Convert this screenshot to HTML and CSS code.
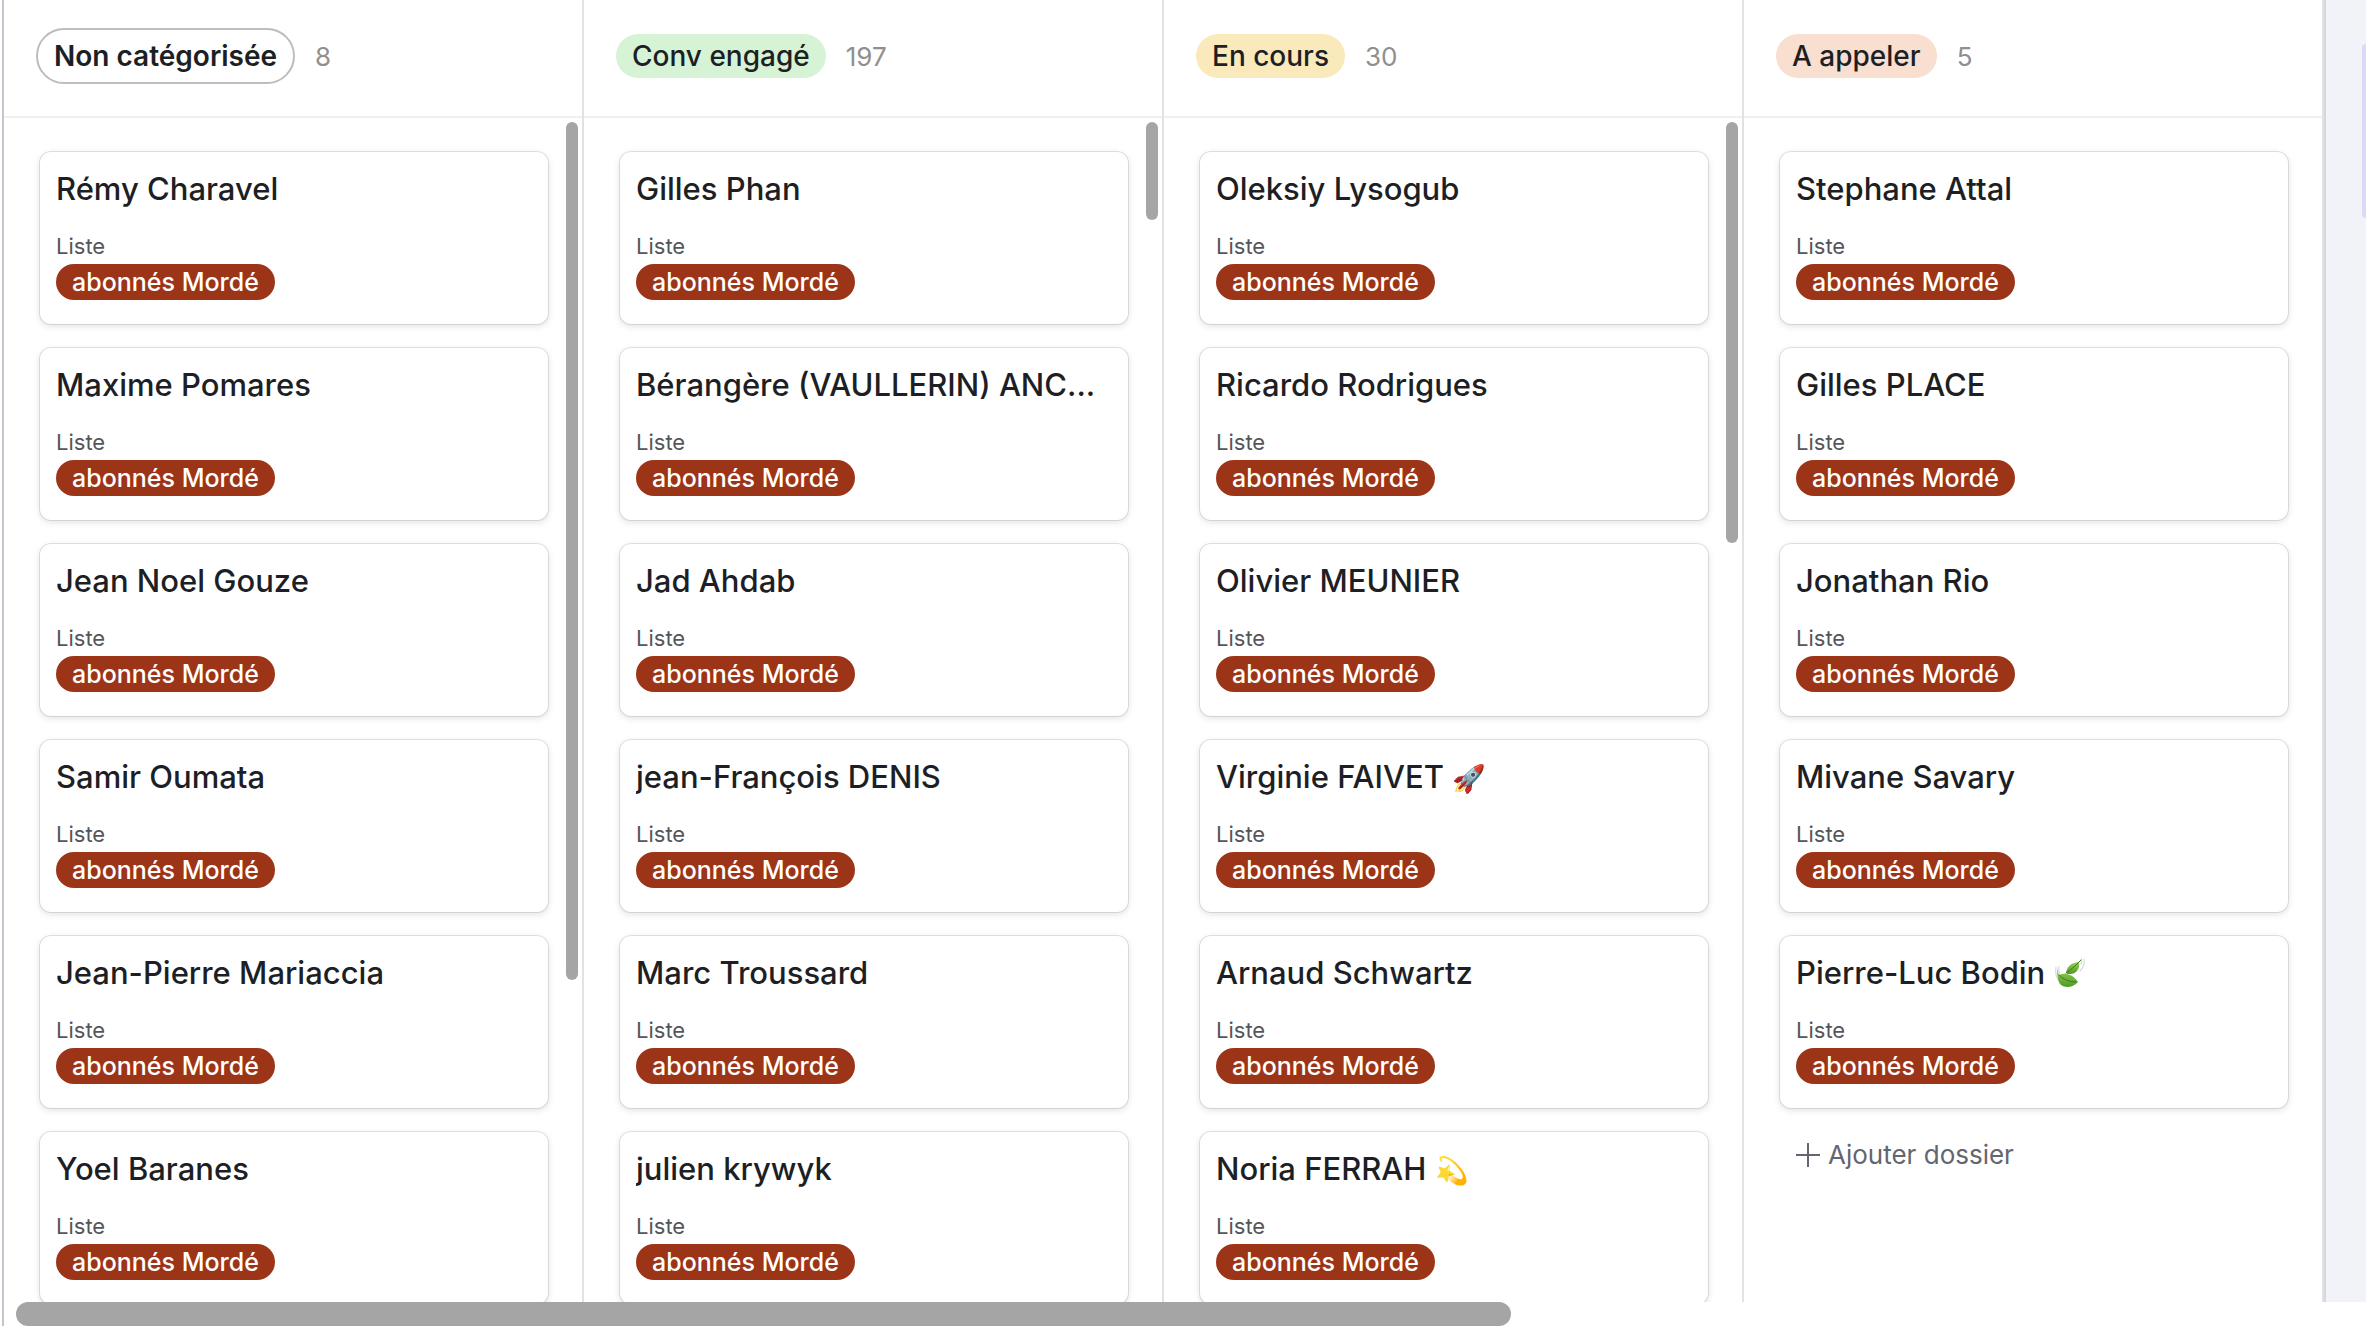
FILE: index.html
```html
<!DOCTYPE html>
<html lang="fr">
<head>
    <meta charset="UTF-8">
    <meta name="viewport" content="width=device-width, initial-scale=1">
    <title>Dossiers</title>
    <link rel="stylesheet" href="styles.css">
</head>
<body>
    <main class="board">
        <div class="columns">
            <section class="column">
                <header class="column-header">
                    <h2 class="status outline">Non catégorisée</h2>
                    <span class="count">8</span>
                </header>
                <div class="column-body">
                    <article class="card">
                        <h3>Rémy Charavel</h3>
                        <p class="label">Liste</p>
                        <span class="tag">abonnés Mordé</span>
                    </article>
                    <article class="card">
                        <h3>Maxime Pomares</h3>
                        <p class="label">Liste</p>
                        <span class="tag">abonnés Mordé</span>
                    </article>
                    <article class="card">
                        <h3>Jean Noel Gouze</h3>
                        <p class="label">Liste</p>
                        <span class="tag">abonnés Mordé</span>
                    </article>
                    <article class="card">
                        <h3>Samir Oumata</h3>
                        <p class="label">Liste</p>
                        <span class="tag">abonnés Mordé</span>
                    </article>
                    <article class="card">
                        <h3>Jean-Pierre Mariaccia</h3>
                        <p class="label">Liste</p>
                        <span class="tag">abonnés Mordé</span>
                    </article>
                    <article class="card">
                        <h3>Yoel Baranes</h3>
                        <p class="label">Liste</p>
                        <span class="tag">abonnés Mordé</span>
                    </article>
                    <div class="scroll-y"><div class="thumb" style="height: 73%"></div></div>
                </div>
            </section>

            <section class="column">
                <header class="column-header">
                    <h2 class="status green">Conv engagé</h2>
                    <span class="count">197</span>
                </header>
                <div class="column-body">
                    <article class="card">
                        <h3>Gilles Phan</h3>
                        <p class="label">Liste</p>
                        <span class="tag">abonnés Mordé</span>
                    </article>
                    <article class="card">
                        <h3>Bérangère (VAULLERIN) ANC...</h3>
                        <p class="label">Liste</p>
                        <span class="tag">abonnés Mordé</span>
                    </article>
                    <article class="card">
                        <h3>Jad Ahdab</h3>
                        <p class="label">Liste</p>
                        <span class="tag">abonnés Mordé</span>
                    </article>
                    <article class="card">
                        <h3>jean-François DENIS</h3>
                        <p class="label">Liste</p>
                        <span class="tag">abonnés Mordé</span>
                    </article>
                    <article class="card">
                        <h3>Marc Troussard</h3>
                        <p class="label">Liste</p>
                        <span class="tag">abonnés Mordé</span>
                    </article>
                    <article class="card">
                        <h3>julien krywyk</h3>
                        <p class="label">Liste</p>
                        <span class="tag">abonnés Mordé</span>
                    </article>
                    <div class="scroll-y"><div class="thumb" style="height: 8.3%"></div></div>
                </div>
            </section>

            <section class="column">
                <header class="column-header">
                    <h2 class="status yellow">En cours</h2>
                    <span class="count">30</span>
                </header>
                <div class="column-body">
                    <article class="card">
                        <h3>Oleksiy Lysogub</h3>
                        <p class="label">Liste</p>
                        <span class="tag">abonnés Mordé</span>
                    </article>
                    <article class="card">
                        <h3>Ricardo Rodrigues</h3>
                        <p class="label">Liste</p>
                        <span class="tag">abonnés Mordé</span>
                    </article>
                    <article class="card">
                        <h3>Olivier MEUNIER</h3>
                        <p class="label">Liste</p>
                        <span class="tag">abonnés Mordé</span>
                    </article>
                    <article class="card">
                        <h3>Virginie FAIVET <span class="emoji">🚀</span></h3>
                        <p class="label">Liste</p>
                        <span class="tag">abonnés Mordé</span>
                    </article>
                    <article class="card">
                        <h3>Arnaud Schwartz</h3>
                        <p class="label">Liste</p>
                        <span class="tag">abonnés Mordé</span>
                    </article>
                    <article class="card">
                        <h3>Noria FERRAH <span class="emoji">💫</span></h3>
                        <p class="label">Liste</p>
                        <span class="tag">abonnés Mordé</span>
                    </article>
                    <div class="scroll-y"><div class="thumb" style="height: 35.8%"></div></div>
                </div>
            </section>

            <section class="column">
                <header class="column-header">
                    <h2 class="status orange">A appeler</h2>
                    <span class="count">5</span>
                </header>
                <div class="column-body">
                    <article class="card">
                        <h3>Stephane Attal</h3>
                        <p class="label">Liste</p>
                        <span class="tag">abonnés Mordé</span>
                    </article>
                    <article class="card">
                        <h3>Gilles PLACE</h3>
                        <p class="label">Liste</p>
                        <span class="tag">abonnés Mordé</span>
                    </article>
                    <article class="card">
                        <h3>Jonathan Rio</h3>
                        <p class="label">Liste</p>
                        <span class="tag">abonnés Mordé</span>
                    </article>
                    <article class="card">
                        <h3>Mivane Savary</h3>
                        <p class="label">Liste</p>
                        <span class="tag">abonnés Mordé</span>
                    </article>
                    <article class="card">
                        <h3>Pierre-Luc Bodin
                            <svg class="leaves" viewBox="0 0 32 32" role="img" aria-label="🍃">
                                <defs>
                                    <linearGradient id="leaf" x1="0" y1="0" x2="0" y2="1">
                                        <stop offset="0" stop-color="#9bd052"/>
                                        <stop offset="1" stop-color="#4f9a2a"/>
                                    </linearGradient>
                                </defs>
                                <path d="M2 9c-1 6 0 11 4 16M5 8c-1 4 0 6 1 8M30 1c1 5-1 9-4 12M27 1c1 2 1 3 0 5" fill="none" stroke="#d9dbde" stroke-width="1.2" stroke-linecap="round"/>
                                <path d="M12 15c1-6 4-10 13-11 1 6-2 12-9 12-2 0-3 0-4-1z" fill="url(#leaf)"/>
                                <path d="M3 10c1 3 1 5 2 7 6-3 14-1 19 7-5 6-13 6-17 3-3-3-4-10-4-17z" fill="url(#leaf)"/>
                                <path d="M12 15C17 12 21 8 27 2M5 17c4 4 10 7 17 7" fill="none" stroke="#3a7c22" stroke-width="1" stroke-linecap="round"/>
                            </svg>
                        </h3>
                        <p class="label">Liste</p>
                        <span class="tag">abonnés Mordé</span>
                    </article>
                    <button class="add" type="button">
                        <svg viewBox="0 0 24 24" aria-hidden="true">
                            <path d="M12 0v24M0 12h24" fill="none" stroke="currentColor" stroke-width="2"/>
                        </svg>
                        Ajouter dossier
                    </button>
                </div>
            </section>

            <!-- collapsed column, continues to the right of the window -->
            <section class="column collapsed">
                <div class="collapsed-status"></div>
            </section>
        </div>
        <div class="scroll-x"><div class="thumb" style="width: 63.6%"></div></div>
    </main>
</body>
</html>
```

FILE: styles.css
```css
* {
    box-sizing: border-box;
}

body {
    margin: 0;
    font-family: Inter, "Noto Sans", sans-serif;
    color: #1d1f25;
    background-color: #fff;
    overflow: hidden;
}

h2, h3, p {
    margin: 0;
}

.board {
    display: flex;
    flex-direction: column;
    height: 100vh;
    margin-left: 2px;
    border-left: 2px solid #c4c4cc;
}

.columns {
    flex: 1;
    min-height: 0;
    display: grid;
    grid-template-columns: repeat(4, minmax(0, 1fr)) 42px;
    overflow: hidden;
}

.column {
    display: flex;
    flex-direction: column;
    min-height: 0;
    border-right: 2px solid #e2e2e4;
}

.column-header {
    display: flex;
    align-items: center;
    gap: 20px;
    height: 118px;
    flex-shrink: 0;
    padding: 0 32px 4px;
    border-bottom: 2px solid #f0f0f1;
}

.status {
    padding: 4px 16px;
    border-radius: 22px;
    font-size: 28px;
    line-height: 36px;
    font-weight: 500;
    white-space: nowrap;
}

.outline {
    padding: 8px 16px;
    border: 2px solid #bdbdbd;
    border-radius: 28px;
    font-weight: 600;
    background-color: #fff;
}

.green {
    background-color: #d6f3d5;
}

.yellow {
    background-color: #fae9bb;
}

.orange {
    background-color: #f9dfcf;
}

.count {
    font-size: 26px;
    color: #8f8f8f;
}

.column-body {
    position: relative;
    display: flex;
    flex-direction: column;
    gap: 24px;
    flex: 1;
    min-height: 0;
    padding: 34px 34px 0 36px;
    overflow: hidden;
}

.card {
    flex-shrink: 0;
    height: 172px;
    padding: 16px;
    border-radius: 11px;
    background-color: #fff;
    box-shadow: 0 0 0 1px rgba(0, 0, 0, 0.1), 0 2px 6px 1px rgba(0, 0, 0, 0.1);
}

.card h3 {
    height: 42px;
    font-size: 31px;
    line-height: 42px;
    font-weight: 500;
    white-space: nowrap;
    overflow: hidden;
    text-overflow: ellipsis;
}

.label {
    margin-top: 22px;
    font-size: 22px;
    line-height: 28px;
    color: #55565a;
}

.tag {
    display: block;
    width: fit-content;
    margin-top: 4px;
    padding: 0 16px;
    border-radius: 18px;
    font-size: 25px;
    line-height: 36px;
    font-weight: 500;
    color: #fff;
    background-color: #9c3518;
}

.emoji {
    font-size: 27px;
    line-height: 1;
}

.leaves {
    width: 32px;
    height: 32px;
    vertical-align: -6px;
}

.add {
    display: flex;
    align-items: center;
    gap: 8px;
    align-self: flex-start;
    padding: 5px 16px;
    border: none;
    background: none;
    font-family: inherit;
    font-size: 26px;
    line-height: 36px;
    color: #636670;
    cursor: pointer;
}

.add svg {
    width: 24px;
    height: 24px;
}

.collapsed {
    padding: 44px 0 0 36px;
    border-left: 2px solid #d6d7db;
    border-right: none;
    background-color: #f2f3f8;
}

.collapsed-status {
    height: 174px;
    border-radius: 20px 0 0 20px;
    background-color: #dcd8f8;
}

/* scrollbars */
.scroll-y {
    position: absolute;
    top: 4px;
    right: 4px;
    bottom: 4px;
    width: 12px;
}

.scroll-x {
    height: 24px;
    padding-left: 12px;
}

.thumb {
    height: 100%;
    border-radius: 12px;
    background-color: #a5a5a5;
}
```
